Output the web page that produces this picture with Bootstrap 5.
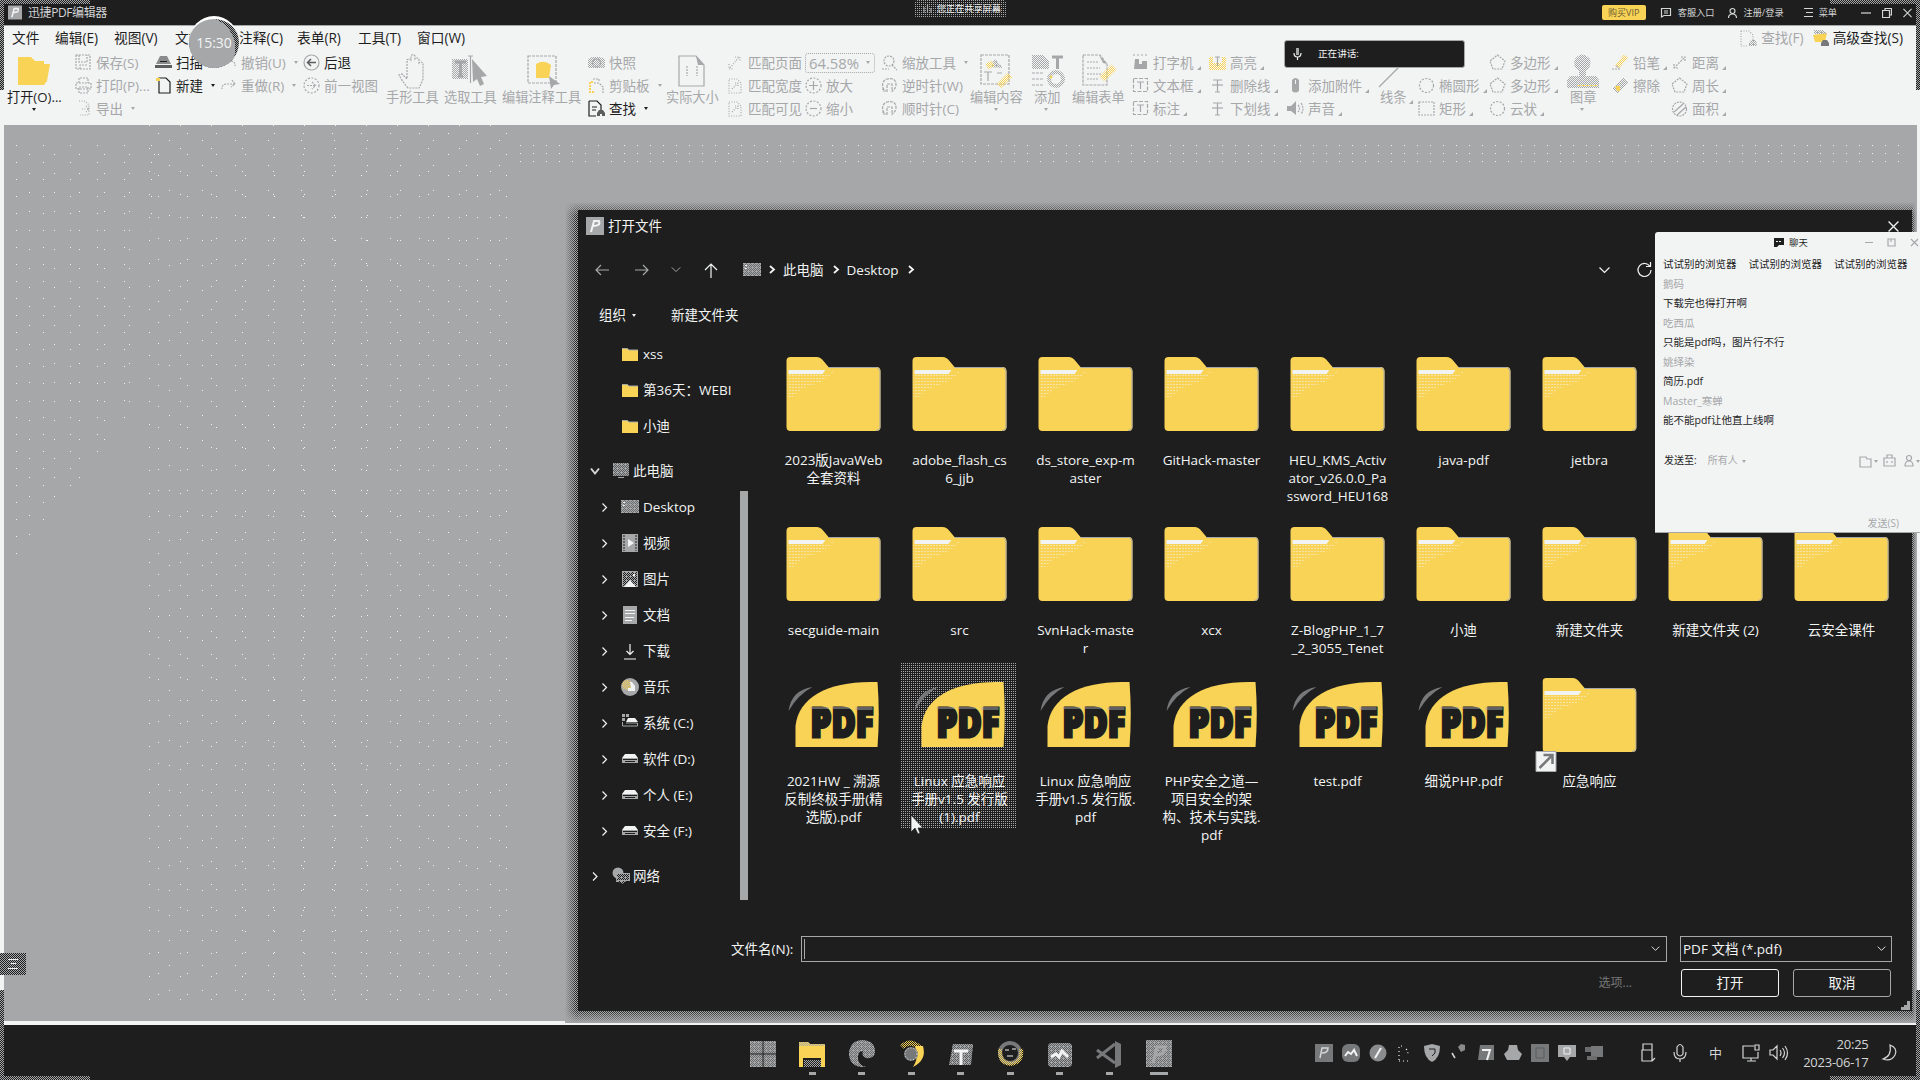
<!DOCTYPE html>
<html lang="zh-CN">
<head>
<meta charset="utf-8">
<title>迅捷PDF编辑器</title>
<link href="https://cdn.jsdelivr.net/npm/bootstrap@5.3.0/dist/css/bootstrap.min.css" rel="stylesheet">
<style>
:root{--ink:#1e1e1e;--mid:#a6a7a9;--paper:#f2f4f4;--sun:#f9d356;
--mesh:conic-gradient(#1e1e1e 25%,#a6a7a9 0 50%,#1e1e1e 0 75%,#a6a7a9 0);
--dots:conic-gradient(from 0deg at 1px 1px,transparent 75%,#a6a7a9 0);
--lightdots:conic-gradient(from 0deg at 1px 1px,transparent 75%,#f2f4f4 0)}
body{width:1920px;height:1080px;overflow:hidden;background:var(--ink);color:var(--paper);font:13.5px/18px "Open Sans","Noto Sans CJK SC",sans-serif}
svg{display:block;flex:none;overflow:visible}
.ln{fill:none;stroke:currentColor;stroke-width:1.2}
.nw{white-space:nowrap}
.app-title{height:26px;border-bottom:1px solid var(--mid);font-size:12px;padding-left:8px;color:#d4d5d6}
.app-title .tools{font-size:9.2px}
.vip{width:44px;height:15px;background:var(--sun);color:#6b5d33;border-radius:2px;font-size:9px;line-height:15px;margin-right:1px}
.app-menu{height:25px;background:var(--paper);color:var(--ink);font-size:13.7px;padding:0 17px 1px 12px}
.menu-grid{display:grid;grid-template-columns:43px 59px 61px 64px 58px 61px 59px 60px}
.ribbon{height:74px;background:var(--paper);color:var(--mid);font-size:13.5px;display:grid;padding-left:7px;
grid-template-columns:68px 80px 65px 83px 83px 58px 58px 86px 78px 61px 78px 76px 89px 62px 40px 60px 77px 78px 93px 38px 71px 77px 46px 59px 60px}
.ribbon>div{min-width:0}
.cmd{height:23px;display:flex;align-items:center;gap:4px;white-space:nowrap}
.cmd svg{width:17px;height:17px}
.big{display:flex;flex-direction:column;align-items:flex-start;white-space:nowrap;font-size:13.2px}
.big svg{height:37px;width:36px}
.more::after{content:"";display:inline-block;border:2px solid transparent;border-right-color:currentColor;border-bottom-color:currentColor;margin-left:3px;vertical-align:-2px}
.on{color:var(--ink)}
.caret{width:0;height:0;border:2.5px solid transparent;border-top:3px solid currentColor;border-bottom:0;display:inline-block;margin-left:4px}
.zoombox{width:70px;height:20px;border:1px dotted var(--mid);border-radius:3px;padding:0 4px 0 3px;font-size:14.8px}
.canvas{background:var(--mid);border-left:4px solid var(--paper);border-right:3px solid var(--paper);border-bottom:4px solid var(--paper)}
.grain{width:370px;height:880px;margin-left:145px;background:var(--lightdots) 0 0/31px 23px,var(--lightdots) 9px 8px/29px 21px,var(--lightdots) 20px 15px/33px 25px}
.grain2{width:140px;height:420px;background:var(--lightdots) 0 0/27px 17px,var(--lightdots) 13px 9px/25px 19px;margin-left:12px;position:absolute;top:145px;clip-path:polygon(0 0,100% 0,90% 60%,0 100%)}
.grain3{position:absolute;left:520px;top:145px;width:1380px;height:24px;background:var(--lightdots) 0 0/13px 8px}
.taskbar{height:55px;background:var(--ink)}
.float-share{position:absolute;left:915px;top:0;width:91px;height:18px;background:var(--dots) 0 0/2px 2px;border-radius:3px;font-size:9.2px}
.clock-disc{position:absolute;left:189px;top:16px;width:50px;height:52px;border-radius:50%;background:radial-gradient(circle at 30% 60%,var(--mid) 68%,transparent 69%),var(--mesh) 0 0/2px 2px;border-top:3px solid #fff;font-size:14px;line-height:48px}
.speaking{position:absolute;left:1284px;top:40px;width:181px;height:28px;background:var(--ink);border:1px solid var(--mid);border-radius:3px;font-size:9.6px;padding-left:8px;gap:16px}
.edge{position:absolute;background:var(--mesh) 0 0/2px 2px}
.halo{position:absolute;left:565px;top:202px;width:1351px;height:821px;background:linear-gradient(90deg,var(--mid),transparent 12px 1347px,var(--mid)),linear-gradient(var(--mid),transparent 14px 808px,var(--mid)),var(--mesh) 0 0/2px 2px}
.dlg{position:absolute;left:578px;top:210px;width:1334px;height:801px;background:var(--ink)}
.dlg-head{height:32px;padding:0 13px 0 8px}
.dlg-nav{height:55px;padding:0 260px 0 17px}
.dlg-tools{height:35px;padding-left:21px;gap:35px}
.dlg-tools .caret{margin-left:6px}
.dlg-body{height:568px}
.side{width:156px;overflow:hidden;padding-top:4px}
.tree{height:36px;display:flex;align-items:center;white-space:nowrap;padding-left:23px}
.tree .chev{width:7px;height:9px;margin-right:13px}
.tree .pic{width:18px;height:18px;margin-right:4px}
.tree.deep0{padding-left:43px}
.tree.root{padding-left:12px;margin-top:9px}
.tree.root .chev{width:10px;margin-right:12px}
.tree.root .pic{margin-right:3px}
.bar-track{width:15px;padding:159px 0 0 6px}
.bar-thumb{width:8px;height:409px;background:var(--mid)}
.files{display:grid;grid-template-columns:repeat(9,126px);grid-template-rows:170px 151px 200px;margin-left:21px;padding-top:10px}
.tile{width:116px;margin:0 5px;padding:15px 0 0 1px;text-align:center;white-space:nowrap;align-self:start}
.tile>svg{margin:0 auto 20px 10px;width:95px;height:74px}
.tile.hot{background:var(--dots) 0 0/2px 2px;height:165px}
.foot-row{height:25px;padding:0 20px 0 153px}
.fname{width:866px;height:26px;border:1px solid var(--mid);margin-left:6px;padding:0 6px 0 2px}
.ftype{width:212px;height:26px;border:1px solid var(--mid);margin-left:13px;padding:0 5px 0 2px}
.text-caret{width:1px;height:20px;background:var(--mid)}
.dbtn{width:98px;height:28px;border:1px solid var(--mid);border-radius:3px;color:var(--paper);background:none;padding:0;font-size:13.5px;line-height:25px}
.dbtn.main{border-color:var(--paper)}
.chat{position:absolute;left:1655px;top:232px;width:265px;height:301px;background:var(--paper);color:var(--ink);border-radius:3px 0 0 0;border-bottom:1px solid var(--mid);font-size:10.5px;line-height:19.5px;overflow:hidden}
.chat-head{height:23px;padding:0 2px 2px 119px;font-size:9.4px;line-height:20px}
.chat-log{height:196px;padding-left:8px}
.who,.faint{color:var(--mid)}
.pinned{gap:12px}
.chat-send{padding:0 0 0 9px;height:20px;font-size:10px}
.starts{display:grid;grid-template-columns:repeat(9,49.5px);padding-left:738px}
.starts>div{display:flex;flex-direction:column;align-items:center}
.starts svg{width:28px;height:28px;margin-top:15px}
.starts i{width:7px;height:3px;background:var(--mid);margin-top:4px}
.starts .cur i{width:18px}
.tray{margin-left:127px;display:grid;grid-template-columns:repeat(11,27px)}
.tray svg,.sys svg{width:18px;height:18px;margin:auto}
.sys{margin-left:25px;color:#d4d5d6;display:grid;grid-template-columns:30px 34px 38px 33px 23px 78px 42px;align-items:center;font-size:13px}
</style>
<script src="https://cdn.jsdelivr.net/npm/bootstrap@5.3.0/dist/js/bootstrap.bundle.min.js"></script>
</head>
<body class="d-flex flex-column position-relative">
<svg width="0" height="0" class="position-absolute">
<defs>
<pattern id="pm" width="2" height="2" patternUnits="userSpaceOnUse"><path fill="#a6a7a9" d="M0 0h1v1H0zM1 1h1v1H1z"/></pattern>
<pattern id="pw" width="3" height="3" patternUnits="userSpaceOnUse"><path fill="#f2f4f4" d="M0 0h1v1H0z"/></pattern>
<pattern id="pp" width="4" height="4" patternUnits="userSpaceOnUse"><path fill="#a6a7a9" d="M0 0h1v1H0zM2 0h1v1H2zM1 1h1v1H1zM3 1h1v1H3zM0 2h2v1H0zM2 2h1v1H2zM1 3h1v1H1zM3 3h1v1H3z"/></pattern>
<pattern id="py" width="2" height="2" patternUnits="userSpaceOnUse"><path fill="#f9d356" d="M0 0h1v1H0zM1 1h1v1H1z"/></pattern>
<symbol id="folder" viewBox="0 0 94 74"><path fill="#f9d356" d="M0 4q0-4 4-4h26q4 0 7 4l5 6h48q4 0 4 4v56q0 4-4 4H4q-4 0-4-4z"/><path fill="none" stroke="#a6a7a9" d="M42 10.500h48q3.500 0 3.500 4v56q0 3-4 3"/><path fill="#f2f4f4" d="M2 13h37l-3 4H2z"/><path fill="url(#pw)" d="M1 17h40l10-4-16 12-20 7L4 42H1z"/></symbol>
<symbol id="pdf" viewBox="0 0 94 74"><path fill="#f9d356" d="M9 69V48C12 20 40 4 84 4h7q2.500 32 0 65z"/><path fill="#77787a" d="M2 33Q5 12 26 9 12 16 2 33z"/><text x="24" y="58.500" font-family="Open Sans" font-weight="800" font-size="40.500" textLength="63" lengthAdjust="spacingAndGlyphs" fill="#1e1e1e" stroke="#1e1e1e" stroke-width="3">PDF</text><path fill="url(#pm)" d="M24 29h18v2H24zM46 29h17v2H46zM69 29h17v3H69z"/></symbol>
<symbol id="fsm" viewBox="0 0 18 18"><path fill="#f9d356" d="M1 3h5l2 2h9v11H1z"/><path stroke="#a6a7a9" fill="none" d="M1 3.500h5l2 1.500h9"/></symbol>
<symbol id="pc" viewBox="0 0 18 18"><path fill="#5c5d5e" d="M1 1h16v13H1z"/><path fill="url(#pp)" d="M1 1h16v13H1z"/><path fill="#a6a7a9" d="M6 15h6v1H6z"/></symbol>
<symbol id="desk" viewBox="0 0 18 18"><path fill="#6b6c6d" d="M0 2h18v13H0z"/><path fill="url(#pp)" d="M0 2h18v13H0z"/><path fill="#f2f4f4" d="M2 4h2v1H2zM2 7h2v1H2z"/></symbol>
<symbol id="vid" viewBox="0 0 18 18"><path fill="#a6a7a9" d="M1 0h16v18H1z"/><path fill="none" stroke="#1e1e1e" stroke-dasharray="2 1" d="M3 1v16M15 1v16"/><path fill="#f2f4f4" d="M7 5l6 4-6 4z"/></symbol>
<symbol id="img" viewBox="0 0 18 18"><path fill="url(#pp)" d="M1 1h16v16H1z"/><path fill="none" stroke="#a6a7a9" d="M1.500 1.500h15v15h-15z"/><path fill="#f2f4f4" d="M3 17l6-7 6 7zM12 4h2v2h-2z"/></symbol>
<symbol id="doc" viewBox="0 0 18 18"><path fill="#a6a7a9" d="M2 0h14v18H2z"/><path stroke="#f2f4f4" d="M4 4.500h10M4 7.500h10M4 11.500h9M4 14.500h7"/></symbol>
<symbol id="down" viewBox="0 0 18 18"><path class="ln" stroke="#a6a7a9" d="M9 2v10M5.500 9L9 12.500 12.500 9M3 17h12"/></symbol>
<symbol id="music" viewBox="0 0 18 18"><circle cx="9" cy="9" r="9" fill="#a6a7a9"/><circle cx="6" cy="7" r="5" fill="url(#py)"/><path fill="#f2f4f4" d="M9 4h2l3 4v5H7v-3h3z"/></symbol>
<symbol id="disk" viewBox="0 0 18 18"><path fill="#f2f4f4" d="M4 4h10l3 4H1z"/><path fill="#a6a7a9" d="M1 8h16v5H1z"/><path stroke="#1e1e1e" d="M2 9.500h14M4 11.500h10"/></symbol>
<symbol id="diskc" viewBox="0 0 18 18"><path fill="#a6a7a9" d="M1 0h3v3H1zM5 0h3v3H5zM1 4h3v3H1z"/><path fill="#f2f4f4" d="M7 4h7l3 4H5z"/><path fill="none" stroke="#a6a7a9" d="M1.500 8v4h15V9H5"/></symbol>
<symbol id="net" viewBox="0 0 18 18"><circle cx="6" cy="6" r="5.500" fill="#a6a7a9"/><path fill="#1e1e1e" d="M4 6h14v8H4z"/><path fill="url(#pp)" d="M4 6h14v8h-4l-3 3-4-2H4z"/><path fill="none" stroke="#a6a7a9" d="M4.500 6.500h13v7h-13z"/></symbol>
<symbol id="cr" viewBox="0 0 7 9"><path class="ln" stroke="#a6a7a9" d="M1.500.500l4 4-4 4"/></symbol>
<symbol id="cd" viewBox="0 0 12 8"><path class="ln" stroke="#d4d5d6" d="M1 1.500l5 5 5-5"/></symbol>
<symbol id="cdb" viewBox="0 0 10 8"><path fill="none" stroke="#d4d5d6" stroke-width="2" d="M1 1l4 5 4-5"/></symbol>
<symbol id="logo" viewBox="0 0 18 18"><path fill="#a6a7a9" d="M0 0h18v18H0z"/><path fill="none" stroke="#f2f4f4" stroke-width="2" d="M5 15L8 4h5q2 5-6 5"/></symbol>
<symbol id="i-save" viewBox="0 0 17 17"><path class="ln" stroke-dasharray="2 1" d="M1 1h14v14H1zM4 1v7h8V1M5 15v-4h7"/></symbol>
<symbol id="i-print" viewBox="0 0 17 17"><path class="ln" stroke-dasharray="2 1" d="M4 6V1h9v5M1 6h15v6H1zM4 10h9v6H4z"/></symbol>
<symbol id="i-exp" viewBox="0 0 17 17"><path class="ln" stroke-dasharray="1 1.500" d="M4 1h6l4 4v10H5M7 9h7M11 6l3 3-3 3"/></symbol>
<symbol id="i-scan" viewBox="0 0 17 17"><path fill="#8a8b8d" d="M5 2h7l4 8H1z"/><path fill="#5c5d5e" d="M0 11h17v3H0z"/><path stroke="#1e1e1e" d="M5 7.500h7"/></symbol>
<symbol id="i-new" viewBox="0 0 17 17"><path class="ln" stroke="#77787a" d="M4 1h7l4 4v11H4z"/><path fill="#f9d356" d="M1 1h4v3H1z"/></symbol>
<symbol id="i-undo" viewBox="0 0 17 17"><path class="ln" stroke-dasharray="2 1" d="M5 3L2 7l4 3M2 7h9q4 0 4 5"/></symbol>
<symbol id="i-redo" viewBox="0 0 17 17"><path class="ln" stroke-dasharray="2 1" d="M12 3l3 4-4 3M15 7H6q-4 0-4 5"/></symbol>
<symbol id="i-back" viewBox="0 0 17 17"><circle class="ln" cx="8.500" cy="8.500" r="7.500"/><path stroke="#5c5d5e" fill="none" stroke-width="1.500" d="M13 8.500H5M8 5L4.500 8.500 8 12"/></symbol>
<symbol id="i-fwd" viewBox="0 0 17 17"><circle class="ln" stroke-dasharray="2 1.500" cx="8.500" cy="8.500" r="7.500"/><path class="ln" stroke-dasharray="2 1" d="M4 8.500h8M9 5l3.500 3.500L9 12"/></symbol>
<symbol id="i-circ" viewBox="0 0 17 17"><circle class="ln" stroke-dasharray="2 1.500" cx="8.500" cy="8.500" r="7"/></symbol>
<symbol id="i-plus" viewBox="0 0 17 17"><circle class="ln" stroke-dasharray="2 1.500" cx="8.500" cy="8.500" r="7.500"/><path class="ln" d="M4 8.500h9M8.500 4v9"/></symbol>
<symbol id="i-minus" viewBox="0 0 17 17"><circle class="ln" stroke-dasharray="2 1.500" cx="8.500" cy="8.500" r="7.500"/><path class="ln" d="M5 8.500h7"/></symbol>
<symbol id="i-cam" viewBox="0 0 17 17"><path fill="url(#pm)" d="M0 5l4-2h8l5 2v9H0z"/><circle class="ln" cx="8.500" cy="9" r="4"/></symbol>
<symbol id="i-clip" viewBox="0 0 17 17"><path class="ln" stroke-dasharray="2 1" d="M5 2h6v3M6 6h5l4 4v6"/><path fill="none" stroke="#f9d356" stroke-width="2" stroke-dasharray="2 1" d="M5 5H2v10h4"/></symbol>
<symbol id="i-find" viewBox="0 0 17 17"><path class="ln" stroke="#77787a" d="M1 1h8l4 4v5M1 1v15h7M4 7h5M4 10h4"/><path fill="#5c5d5e" d="M9 16v-3l2-3h4l2 3v3h-3v-2h-2v2z"/></symbol>
<symbol id="i-findg" viewBox="0 0 17 17"><path class="ln" stroke-dasharray="1 1.500" d="M1 1h8l4 4v5M1 1v15h7"/><path fill="url(#pp)" d="M9 16v-3l2-3h4l2 3v3z"/></symbol>
<symbol id="i-findy" viewBox="0 0 17 17"><path fill="#f9d356" d="M1 5l14-2-2 9H3z"/><path fill="url(#pp)" d="M2 0h9l4 4H2z"/><path fill="#77787a" d="M9 16v-3l2-3h4l2 3v3z"/></symbol>
<symbol id="i-fit" viewBox="0 0 17 17"><path class="ln" stroke-dasharray="1 1.500" d="M3 14L12 3M8 3h5v5M2 10v5h5"/></symbol>
<symbol id="i-page" viewBox="0 0 17 17"><path class="ln" stroke-dasharray="1 1.500" d="M2 2h8l4 4v10H2zM5 12l6-6M8 6h3v3"/></symbol>
<symbol id="i-zoom" viewBox="0 0 17 17"><circle class="ln" stroke-dasharray="2 1" cx="8" cy="7" r="5"/><path class="ln" stroke-dasharray="2 1" d="M11 11l5 5M1 15h7"/></symbol>
<symbol id="i-rot" viewBox="0 0 17 17"><path class="ln" stroke-dasharray="3 1" d="M5 14H2v-3M3 13Q-1 5 6 2q9-2 9 6-1 5-4 6M6 15V7h5v8"/></symbol>
<symbol id="i-box" viewBox="0 0 17 17"><path class="ln" stroke-dasharray="4 1.500" d="M1.500 1.500h14v13h-14z"/><path class="ln" d="M5 5h7M8.500 5v7"/></symbol>
<symbol id="i-type" viewBox="0 0 17 17"><path class="ln" stroke-dasharray="2 2" d="M1 1h15"/><path fill="currentColor" d="M3 5h4v5h3V7h5v8H2z"/></symbol>
<symbol id="i-hi" viewBox="0 0 17 17"><path fill="url(#py)" d="M0 3h4v6h9V3h4v13H0z"/><path class="ln" stroke-width="2" d="M6 3h5M8.500 3v9"/></symbol>
<symbol id="i-t" viewBox="0 0 17 17"><path class="ln" d="M4 3h9M8.500 3v12M6 15h5" stroke-width="1.600"/><path class="ln" d="M3 8h11"/></symbol>
<symbol id="i-att" viewBox="0 0 17 17"><path fill="currentColor" d="M5 3q3.500-4 7 0v11q-3.500 3-7 0z"/><path stroke="#f2f4f4" d="M8.500 3v4"/></symbol>
<symbol id="i-snd" viewBox="0 0 17 17"><path fill="currentColor" d="M0 6h4l5-5v14l-5-4H0z"/><path class="ln" stroke-dasharray="2 1" d="M11 5q3 3 0 7M14 3q4 6 0 11"/></symbol>
<symbol id="i-rect" viewBox="0 0 17 17"><path class="ln" stroke-dasharray="2 1" d="M1 2h15v13H1z"/></symbol>
<symbol id="i-poly" viewBox="0 0 17 17"><path class="ln" stroke-dasharray="2 1" d="M8.500 1L16 7l-3 8H4L1 7z"/></symbol>
<symbol id="i-pen" viewBox="0 0 17 17"><path stroke="url(#py)" stroke-width="5" d="M5 13L14 2"/><path class="ln" stroke-dasharray="2 1" d="M0 15h9M4 12l3 2"/></symbol>
<symbol id="i-erase" viewBox="0 0 17 17"><path stroke="url(#pm)" stroke-width="7" d="M3 14L14 3"/><path fill="#f9d356" d="M3 9h5v5H5z"/></symbol>
<symbol id="i-dist" viewBox="0 0 17 17"><path class="ln" stroke-dasharray="2 1" d="M3 14L14 3M10 3h4v4M3 10v4h4"/></symbol>
<symbol id="i-area" viewBox="0 0 17 17"><circle class="ln" cx="8.500" cy="9" r="7" stroke-dasharray="2 1"/><path class="ln" d="M3 12l9-8M6 15l9-8"/></symbol>
<symbol id="c-x" viewBox="0 0 10 10"><path class="ln" d="M.500.500l9 9M9.500.500l-9 9"/></symbol>
<symbol id="c-r" viewBox="0 0 10 10"><path class="ln" d="M.500 2.500h7v7h-7zM3 2.500v-2h6.500V7H8"/></symbol>
<symbol id="c-m" viewBox="0 0 10 10"><path class="ln" d="M0 5h10"/></symbol>
</defs></svg>

<header class="app-title d-flex align-items-center flex-shrink-0">
  <svg width="14" height="17"><use href="#logo"/></svg><span class="nw" style="letter-spacing:-.4px;margin-left:6px">迅捷PDF编辑器</span>
  <div class="tools d-flex align-items-center ms-auto nw">
    <span class="vip text-center">购买VIP</span>
    <svg style="margin-left:14px" width="10" height="9"><path class="ln" d="M.500.500h9v7H3L.500 9zM3 3h4M3 5h4"/></svg><span style="margin-left:7px">客服入口</span>
    <svg style="margin-left:13px" width="9" height="10"><circle class="ln" cx="4.500" cy="3" r="2.500"/><path class="ln" d="M.500 10q0-4 4-4t4 4"/></svg><span style="margin-left:7px">注册/登录</span>
    <svg style="margin-left:20px" width="9" height="9"><path class="ln" d="M0 .500h9M2 4.500h7M0 8.500h9"/></svg><span style="margin-left:6px">菜单</span>
    <svg style="margin-left:24px" width="10" height="10"><use href="#c-m"/></svg>
    <svg style="margin-left:11px" width="10" height="10"><use href="#c-r"/></svg>
    <svg style="margin:0 8px 0 11px" width="9" height="10"><use href="#c-x"/></svg>
  </div>
</header>

<nav class="app-menu d-flex align-items-center justify-content-between flex-shrink-0 nw">
  <div class="menu-grid"><span>文件</span><span>编辑(E)</span><span>视图(V)</span><span>文档(D)</span><span>注释(C)</span><span>表单(R)</span><span>工具(T)</span><span>窗口(W)</span></div>
  <div class="d-flex align-items-center gap-1"><svg width="17" height="17" class="faint"><use href="#i-findg"/></svg><span class="faint me-1">查找(F)</span><svg width="17" height="17"><use href="#i-findy"/></svg><span>高级查找(S)</span></div>
</nav>

<section class="ribbon flex-shrink-0">
  <div class="big on"><svg viewBox="0 0 36 37" style="margin-left:9px"><path fill="#f9d356" d="M2 6h13l4 4h9v3h6l-3 17-3 4H2z"/></svg>打开(O)...<i class="caret" style="margin:2px 0 0 25px"></i></div>
  <div><div class="cmd"><svg><use href="#i-save"/></svg>保存(S)</div><div class="cmd"><svg><use href="#i-print"/></svg>打印(P)...</div><div class="cmd"><svg><use href="#i-exp"/></svg>导出<i class="caret"></i></div></div>
  <div><div class="cmd on"><svg><use href="#i-scan"/></svg>扫描</div><div class="cmd on"><svg><use href="#i-new"/></svg>新建<i class="caret"></i></div></div>
  <div><div class="cmd"><svg><use href="#i-undo"/></svg>撤销(U)<i class="caret"></i></div><div class="cmd"><svg><use href="#i-redo"/></svg>重做(R)<i class="caret"></i></div></div>
  <div><div class="cmd"><svg><use href="#i-back"/></svg><span class="on">后退</span></div><div class="cmd"><svg><use href="#i-fwd"/></svg>前一视图</div></div>
  <div class="big"><svg viewBox="0 0 36 37" style="margin-left:8px"><path class="ln" stroke-dasharray="2 1" d="M14 37Q8 30 5 24l3-1 5 5V9q2-2 4 0V5q2-3 4 0v3q2-2 4 0v4q2-2 4 0v16q-2 5-4 9z"/></svg>手形工具</div>
  <div class="big"><svg viewBox="0 0 36 37" style="margin-left:8px"><path fill="url(#pm)" d="M0 8h16v20H0z"/><path stroke="#a6a7a9" stroke-width="3" fill="none" d="M3 11h11M8.500 11v14M6 25h5"/><path class="ln" d="M16 5h5M18.500 5v27"/><path fill="#a6a7a9" d="M20 8l15 17-6 1 3 7-4 2-3-7-4 3z"/></svg>选取工具</div>
  <div class="big"><svg viewBox="0 0 36 37" style="margin-left:23px"><path class="ln" stroke-dasharray="3 1" d="M3 5h28v27H3z"/><path fill="#f9d356" d="M11 13q8-5 15 1l-2 13H11z"/><path fill="#a6a7a9" d="M24 25l11 8-6 1-3 4z"/></svg>编辑注释工具</div>
  <div><div class="cmd"><svg><use href="#i-cam"/></svg>快照</div><div class="cmd"><svg><use href="#i-clip"/></svg>剪贴板<i class="caret"></i></div><div class="cmd on"><svg><use href="#i-find"/></svg>查找<i class="caret"></i></div></div>
  <div class="big"><svg viewBox="0 0 36 37" style="margin-left:12px"><path class="ln" d="M1 5h17l8 9v21H1z"/><path fill="#a6a7a9" d="M18 5l8 9h-6z"/><path class="ln" stroke-dasharray="2 1" d="M9 15v10M19 15v10"/></svg>实际大小</div>
  <div><div class="cmd"><svg><use href="#i-fit"/></svg>匹配页面</div><div class="cmd"><svg><use href="#i-page"/></svg>匹配宽度</div><div class="cmd"><svg><use href="#i-page"/></svg>匹配可见</div></div>
  <div><div class="cmd"><div class="zoombox d-flex align-items-center justify-content-between">64.58%<i class="caret"></i></div></div><div class="cmd"><svg><use href="#i-plus"/></svg>放大</div><div class="cmd"><svg><use href="#i-minus"/></svg>缩小</div></div>
  <div><div class="cmd"><svg><use href="#i-zoom"/></svg>缩放工具<i class="caret"></i></div><div class="cmd"><svg><use href="#i-rot"/></svg>逆时针(W)</div><div class="cmd"><svg><use href="#i-rot"/></svg>顺时针(C)</div></div>
  <div class="big"><svg viewBox="0 0 36 37" style="margin-left:9px"><path class="ln" stroke-dasharray="3 1" d="M2 4h28v29H2z"/><path fill="url(#pp)" d="M10 16l6-8 8 9z"/><path class="ln" d="M5 21h8M9 21v9M18 22h5"/><path stroke="url(#py)" stroke-width="6" d="M20 35L31 24M8 16l6-4"/></svg>编辑内容<i class="caret" style="margin:2px 0 0 24px"></i></div>
  <div class="big"><svg viewBox="0 0 36 37"><path fill="url(#pm)" d="M0 4h11l6 6v8H0z"/><path stroke="#a6a7a9" stroke-width="3" fill="none" d="M20 6h11M25.500 6v12"/><path class="ln" stroke-dasharray="3 1" d="M0 22h11M0 28h11M0 34h11"/><circle cx="24" cy="28" r="7" fill="none" stroke="url(#pm)" stroke-width="4"/><circle cx="19" cy="26" r="1.500" fill="#f9d356"/></svg><span style="margin-left:2px">添加</span><i class="caret" style="margin:2px 0 0 12px"></i></div>
  <div class="big"><svg viewBox="0 0 36 37" style="margin-left:10px"><path class="ln" stroke-dasharray="3 1" d="M1 4h17l7 9v21H1z"/><path fill="#a6a7a9" d="M17 4l8 9-4-1z"/><path class="ln" stroke-dasharray="2 1" d="M5 11h12M5 17h13M5 23h14M5 28h12"/><path stroke="url(#py)" stroke-width="7" d="M20 28L32 16"/></svg>编辑表单</div>
  <div><div class="cmd"><svg><use href="#i-type"/></svg><span class="more">打字机</span></div><div class="cmd"><svg><use href="#i-box"/></svg><span class="more">文本框</span></div><div class="cmd"><svg><use href="#i-box"/></svg><span class="more">标注</span></div></div>
  <div><div class="cmd"><svg><use href="#i-hi"/></svg><span class="more">高亮</span></div><div class="cmd"><svg><use href="#i-t"/></svg><span class="more">删除线</span></div><div class="cmd"><svg><use href="#i-t"/></svg><span class="more">下划线</span></div></div>
  <div><div class="cmd"></div><div class="cmd"><svg><use href="#i-att"/></svg><span class="more">添加附件</span></div><div class="cmd"><svg><use href="#i-snd"/></svg><span class="more">声音</span></div></div>
  <div class="big"><svg viewBox="0 0 36 37"><path class="ln" d="M-1 36L29 6"/></svg><span class="more">线条</span></div>
  <div><div class="cmd"></div><div class="cmd"><svg><use href="#i-circ"/></svg><span class="more">椭圆形</span></div><div class="cmd"><svg><use href="#i-rect"/></svg><span class="more">矩形</span></div></div>
  <div><div class="cmd"><svg><use href="#i-poly"/></svg><span class="more">多边形</span></div><div class="cmd"><svg><use href="#i-poly"/></svg><span class="more">多边形</span></div><div class="cmd"><svg><use href="#i-circ"/></svg><span class="more">云状</span></div></div>
  <div class="big"><svg viewBox="0 0 36 37"><path fill="url(#pm)" d="M9 8q7-9 15 0 2 8-4 12v5h10l3 4v8H1v-8l3-4h9v-5Q6 15 9 8z"/><path stroke="#f9d356" stroke-dasharray="3 1" d="M12 34.500h19"/></svg><span style="margin-left:4px">图章</span><i class="caret" style="margin:2px 0 0 14px"></i></div>
  <div><div class="cmd"><svg><use href="#i-pen"/></svg><span class="more">铅笔</span></div><div class="cmd"><svg><use href="#i-erase"/></svg>擦除</div></div>
  <div><div class="cmd"><svg><use href="#i-dist"/></svg><span class="more">距离</span></div><div class="cmd"><svg><use href="#i-poly"/></svg><span class="more">周长</span></div><div class="cmd"><svg><use href="#i-area"/></svg><span class="more">面积</span></div></div>
</section>

<main class="canvas flex-fill"><div class="grain"></div><div class="grain2"></div><div class="grain3"></div></main>

<footer class="taskbar d-flex flex-shrink-0">
  <div class="starts">
    <div><svg viewBox="0 0 28 28"><path fill="#6b6c6d" d="M1 1h26v26H1z"/><path fill="url(#pp)" d="M1 1h26v26H1z"/><path stroke="#1e1e1e" d="M14 1v26M1 14h26"/></svg></div>
    <div><svg viewBox="0 0 28 28"><path fill="#f9d356" d="M1 2h9l2 2h15v23h-4v-9H5v9H1z"/><path fill="url(#pm)" d="M1 2h9l2 2h15v2H1zM6 20h17v7H6z"/></svg><i></i></div>
    <div><svg viewBox="0 0 28 28"><path fill="#6b6c6d" d="M1 14Q2 0 15 0q12 1 12 12-1 7-9 6-5-2-3-7-6 0-5 9 2 6 8 7-16 1-17-13z"/><path fill="url(#pp)" d="M1 14Q2 0 15 0q12 1 12 12-1 7-9 6-5-2-3-7-6 0-5 9 2 6 8 7-16 1-17-13z"/></svg><i></i></div>
    <div><svg viewBox="0 0 28 28"><path fill="none" stroke="url(#py)" stroke-width="5" d="M5 7q8-8 18 1"/><path fill="#f9d356" d="M18 6h8q4 14-10 21 5-8 3-14z"/><circle cx="14" cy="14" r="7" fill="#77787a"/><circle cx="14" cy="14" r="6" fill="none" stroke="#f2f4f4" stroke-dasharray="1 2"/></svg><i></i></div>
    <div><svg viewBox="0 0 28 28"><path fill="#5c5d5e" d="M6 4h20l-2 21H2z"/><path fill="url(#pp)" d="M6 4h20l-2 21H2z"/><path stroke="#f2f4f4" stroke-width="3" fill="none" d="M7 11h14M14 10v15"/></svg><i></i></div>
    <div><svg viewBox="0 0 28 28"><circle cx="14" cy="13" r="10" fill="none" stroke="#77787a" stroke-width="4"/><path fill="none" stroke="url(#py)" stroke-width="4" d="M4 9q-1 14 11 15 12-2 10-15"/><path class="ln" stroke="#a6a7a9" d="M9 10h4M16 9h4M11 16h6"/></svg><i></i></div>
    <div><svg viewBox="0 0 28 28"><rect x="2" y="3" width="24" height="24" rx="4" fill="#5c5d5e"/><rect x="2" y="3" width="24" height="24" rx="4" fill="url(#pp)"/><path stroke="#f2f4f4" stroke-width="3" fill="none" d="M5 17l5-3 3 3 3-6 6 6"/></svg><i></i></div>
    <div><svg viewBox="0 0 28 28"><path fill="#77787a" d="M20 1l6 3v21l-6 3z"/><path fill="none" stroke="#77787a" stroke-width="3" d="M20 4L2 18M20 23L2 10"/></svg><i></i></div>
    <div class="cur"><svg viewBox="0 0 28 28"><path fill="#6b6c6d" d="M1 0h26v27H1z"/><path fill="url(#pp)" d="M1 0h26v27H1z"/><path stroke="#a6a7a9" stroke-width="3" fill="none" d="M8 23l4-16h8q0 8-9 8"/></svg><i></i></div>
  </div>
  <div class="tray">
    <svg viewBox="0 0 18 18"><path fill="#77787a" d="M0 0h18v18H0z"/><path stroke="#d4d5d6" fill="none" stroke-width="1.500" d="M5 14L7 4h6q0 5-6 5"/></svg>
    <svg viewBox="0 0 18 18"><rect width="18" height="18" rx="6" fill="#77787a"/><path stroke="#f2f4f4" stroke-width="2" fill="none" d="M3 12l3-4 3 2 3-4 3 6"/></svg>
    <svg viewBox="0 0 18 18"><circle cx="9" cy="9" r="8.500" fill="#8a8b8d"/><path stroke="#f2f4f4" stroke-width="2" d="M6 14l6-10"/></svg>
    <svg viewBox="0 0 18 18"><path class="ln" stroke="#77787a" stroke-dasharray="1 3" d="M3 16V2h4M10 5q4 3 0 6M3 17h12"/></svg>
    <svg viewBox="0 0 18 18"><path fill="#a6a7a9" d="M1 2l8-2 8 2q0 12-8 16-8-4-8-16z"/><path stroke="#1e1e1e" fill="none" d="M6 5h6v4l-3 3"/></svg>
    <svg viewBox="0 0 18 18"><path fill="#8a8b8d" d="M8 3l3-3 4 1v5l-4 2z"/><path stroke="#d4d5d6" stroke-width="1.500" d="M2 9l3 5"/></svg>
    <svg viewBox="0 0 18 18"><path fill="#77787a" d="M3 1h14v15H1z"/><path stroke="#f2f4f4" stroke-width="2" fill="none" d="M5 6h8l-3 10"/></svg>
    <svg viewBox="0 0 18 18"><path fill="#a6a7a9" d="M5 1h8l1 5 4 4-3 6H3l-3-6 4-4z"/></svg>
    <svg viewBox="0 0 18 18"><path fill="#77787a" d="M0 0h18v18H0z"/><path stroke="#5c5d5e" fill="none" d="M5 4h8v10H5z"/></svg>
    <svg viewBox="0 0 18 18"><path fill="#a6a7a9" d="M0 1h18v12h-6l-3 4-3-4H0z"/><path stroke="#f2f4f4" fill="none" d="M6 4h6v6H6z"/></svg>
    <svg viewBox="0 0 18 18"><path fill="#77787a" d="M6 2h12v11H6z"/><path fill="#6b6c6d" d="M0 3h6v5H0zM2 12h10v4H2z"/></svg>
  </div>
  <div class="sys">
    <svg viewBox="0 0 18 18"><path class="ln" stroke="#a6a7a9" d="M4 0h9v6H4zM3 6h10v11H3zM13 17l3-3"/></svg>
    <svg viewBox="0 0 18 18"><path class="ln" d="M6 3q3-5 6 0v7q-3 4-6 0zM3 8q0 7 6 7t6-7M9 15v3"/></svg>
    <span class="text-center">中</span>
    <svg viewBox="0 0 18 18"><path class="ln" stroke-width="1.600" d="M12 2H1v12h15V8M5 17h9M13 1h4v5h-4zM9 14v3"/></svg>
    <svg viewBox="0 0 18 18"><path class="ln" stroke-width="1.600" d="M0 6h3l4-4v13l-4-4H0zM10 6q2 3 0 6M12.500 4q4 5 0 10M15 2q5 7 0 14"/></svg>
    <div class="text-end nw" style="letter-spacing:-.25px"><div>20:25</div><div>2023-06-17</div></div>
    <svg viewBox="0 0 18 18"><path class="ln" stroke-width="1.600" d="M9 1q8 3 5 10-4 7-12 4 9-3 7-14z"/></svg>
  </div>
</footer>

<div class="halo"></div>
<section class="dlg d-flex flex-column">
  <div class="dlg-head d-flex align-items-center"><svg width="18" height="18" class="me-1"><use href="#logo"/></svg>打开文件<svg class="ms-auto" width="11" height="11"><use href="#c-x"/></svg></div>
  <div class="dlg-nav d-flex align-items-center">
    <svg width="14" height="12" class="faint"><path class="ln" stroke-width="1.500" d="M14 6H1M6 1L1 6l5 5"/></svg>
    <svg width="14" height="12" class="faint" style="margin-left:26px"><path class="ln" stroke-width="1.500" d="M0 6h13M8 1l5 5-5 5"/></svg>
    <svg width="10" height="7" class="faint" style="margin-left:22px"><use href="#cd"/></svg>
    <svg width="14" height="16" style="margin-left:23px"><path class="ln" stroke-width="1.600" d="M7 16V2M1 8l6-6 6 6"/></svg>
    <svg width="18" height="18" style="margin-left:25px"><use href="#desk"/></svg>
    <svg width="6" height="9" style="margin:0 8px 0 8px"><path fill="none" stroke="#f2f4f4" stroke-width="1.800" d="M1 1l4 3.500L1 8"/></svg>此电脑
    <svg width="6" height="9" style="margin:0 8px 0 9px"><path fill="none" stroke="#f2f4f4" stroke-width="1.800" d="M1 1l4 3.500L1 8"/></svg>Desktop
    <svg width="6" height="9" style="margin-left:9px"><path fill="none" stroke="#f2f4f4" stroke-width="1.800" d="M1 1l4 3.500L1 8"/></svg>
    <svg width="13" height="8" class="ms-auto"><use href="#cd"/></svg>
    <svg width="15" height="15" style="margin-left:26px"><path class="ln" stroke-width="1.500" d="M13 4.500A6.500 6.500 0 1 0 14 8M13.500 0v4.500H9"/></svg>
  </div>
  <div class="dlg-tools d-flex align-items-center"><span>组织<i class="caret align-middle"></i></span><span>新建文件夹</span></div>
  <div class="dlg-body d-flex">
    <div class="side flex-shrink-0">
      <div class="tree deep0"><svg class="pic"><use href="#fsm"/></svg>xss</div>
      <div class="tree deep0"><svg class="pic"><use href="#fsm"/></svg>第36天：WEBI</div>
      <div class="tree deep0"><svg class="pic"><use href="#fsm"/></svg>小迪</div>
      <div class="tree root"><svg class="chev"><use href="#cdb"/></svg><svg class="pic"><use href="#pc"/></svg>此电脑</div>
      <div class="tree"><svg class="chev"><use href="#cr"/></svg><svg class="pic"><use href="#desk"/></svg>Desktop</div>
      <div class="tree"><svg class="chev"><use href="#cr"/></svg><svg class="pic"><use href="#vid"/></svg>视频</div>
      <div class="tree"><svg class="chev"><use href="#cr"/></svg><svg class="pic"><use href="#img"/></svg>图片</div>
      <div class="tree"><svg class="chev"><use href="#cr"/></svg><svg class="pic"><use href="#doc"/></svg>文档</div>
      <div class="tree"><svg class="chev"><use href="#cr"/></svg><svg class="pic"><use href="#down"/></svg>下载</div>
      <div class="tree"><svg class="chev"><use href="#cr"/></svg><svg class="pic"><use href="#music"/></svg>音乐</div>
      <div class="tree"><svg class="chev"><use href="#cr"/></svg><svg class="pic"><use href="#diskc"/></svg>系统 (C:)</div>
      <div class="tree"><svg class="chev"><use href="#cr"/></svg><svg class="pic"><use href="#disk"/></svg>软件 (D:)</div>
      <div class="tree"><svg class="chev"><use href="#cr"/></svg><svg class="pic"><use href="#disk"/></svg>个人 (E:)</div>
      <div class="tree"><svg class="chev"><use href="#cr"/></svg><svg class="pic"><use href="#disk"/></svg>安全 (F:)</div>
      <div class="tree root"><svg class="chev"><use href="#cr"/></svg><svg class="pic"><use href="#net"/></svg>网络</div>
    </div>
    <div class="bar-track flex-shrink-0"><div class="bar-thumb"></div></div>
    <div class="files">
      <div class="tile"><svg><use href="#folder"/></svg>2023版JavaWeb<br>全套资料</div>
      <div class="tile"><svg><use href="#folder"/></svg>adobe_flash_cs<br>6_jjb</div>
      <div class="tile"><svg><use href="#folder"/></svg>ds_store_exp-m<br>aster</div>
      <div class="tile"><svg><use href="#folder"/></svg>GitHack-master</div>
      <div class="tile"><svg><use href="#folder"/></svg>HEU_KMS_Activ<br>ator_v26.0.0_Pa<br>ssword_HEU168</div>
      <div class="tile"><svg><use href="#folder"/></svg>java-pdf</div>
      <div class="tile"><svg><use href="#folder"/></svg>jetbra</div>
      <div></div><div></div>
      <div class="tile"><svg><use href="#folder"/></svg>secguide-main</div>
      <div class="tile"><svg><use href="#folder"/></svg>src</div>
      <div class="tile"><svg><use href="#folder"/></svg>SvnHack-maste<br>r</div>
      <div class="tile"><svg><use href="#folder"/></svg>xcx</div>
      <div class="tile"><svg><use href="#folder"/></svg>Z-BlogPHP_1_7<br>_2_3055_Tenet</div>
      <div class="tile"><svg><use href="#folder"/></svg>小迪</div>
      <div class="tile"><svg><use href="#folder"/></svg>新建文件夹</div>
      <div class="tile"><svg><use href="#folder"/></svg>新建文件夹 (2)</div>
      <div class="tile"><svg><use href="#folder"/></svg>云安全课件</div>
      <div class="tile"><svg><use href="#pdf"/></svg>2021HW _ 溯源<br>反制终极手册(精<br>选版).pdf</div>
      <div class="tile hot"><svg><use href="#pdf"/></svg>Linux 应急响应<br>手册v1.5 发行版<br>(1).pdf</div>
      <div class="tile"><svg><use href="#pdf"/></svg>Linux 应急响应<br>手册v1.5 发行版.<br>pdf</div>
      <div class="tile"><svg><use href="#pdf"/></svg>PHP安全之道—<br>项目安全的架<br>构、技术与实践.<br>pdf</div>
      <div class="tile"><svg><use href="#pdf"/></svg>test.pdf</div>
      <div class="tile"><svg><use href="#pdf"/></svg>细说PHP.pdf</div>
      <div class="tile"><svg viewBox="0 0 94 74"><use href="#folder" width="94" height="74"/><path fill="#f2f4f4" stroke="#a6a7a9" d="M-6.500 73.500h20v20h-20z"/><path fill="none" stroke="#77787a" stroke-width="2.500" d="M-3 90L9 78M1 77h9v9"/></svg>应急响应</div>
    </div>
  </div>
  <div class="d-flex flex-column" style="padding-top:36px">
    <div class="foot-row d-flex align-items-center nw"><span class="flex-shrink-0" style="width:64px">文件名(N):</span>
      <div class="fname d-flex align-items-center justify-content-between flex-shrink-0"><span class="text-caret"></span><svg width="9" height="7"><use href="#cd"/></svg></div>
      <div class="ftype d-flex align-items-center justify-content-between flex-shrink-0">PDF 文档 (*.pdf)<svg width="9" height="7"><use href="#cd"/></svg></div></div>
    <div class="d-flex justify-content-end align-items-center mt-2" style="padding-right:21px"><span class="nw" style="margin-right:49px;color:#77787a;font-size:12px">选项...</span><button class="dbtn main">打开</button><button class="dbtn" style="margin-left:14px">取消</button></div>
  </div>
</section>
<svg class="position-absolute" style="left:1901px;top:1001px" width="9" height="9"><path fill="#a6a7a9" d="M6 0h3v9H0V6h3V4h3z"/></svg>

<aside class="chat">
  <div class="chat-head d-flex align-items-center nw"><svg width="10" height="9" style="margin-right:5px"><path fill="#1e1e1e" d="M0 0h10v7H5L3 9H0z"/><path stroke="#f2f4f4" stroke-dasharray="2 1" d="M2 3.500h6"/></svg>聊天
    <span class="faint d-flex ms-auto"><svg width="8" height="9"><path class="ln" stroke-width="2" d="M0 4.500h8"/></svg><svg width="9" height="9" style="margin:0 15px 0 14px"><path class="ln" d="M1 1h7v7H1zM4 1v3"/></svg><svg width="7" height="9"><path class="ln" d="M0 1l7 7M7 1L0 8"/></svg></span></div>
  <div class="chat-log nw">
    <div class="d-flex pinned"><span>试试别的浏览器</span><span>试试别的浏览器</span><span>试试别的浏览器</span></div>
    <div class="who">鹅码</div><div>下载完也得打开啊</div>
    <div class="who">吃西瓜</div><div>只能是pdf吗，图片行不行</div>
    <div class="who">姚绎染</div><div>简历.pdf</div>
    <div class="who">Master_寒蝉</div><div>能不能pdf让他直上线啊</div>
  </div>
  <div class="chat-send d-flex align-items-center nw">发送至:<span class="faint" style="margin-left:11px">所有人<i class="caret align-middle"></i></span>
    <span class="faint d-flex align-items-center ms-auto"><svg width="13" height="11"><path class="ln" d="M1 1h6l1 2h4v8H1z"/></svg><i class="caret" style="margin-left:2px"></i><svg width="13" height="12" style="margin:0 8px 0 5px"><path class="ln" d="M1 3h11v8H1zM4 3V0h5v3M4 6v2M9 6v2"/></svg><svg width="10" height="12"><circle class="ln" cx="5" cy="3" r="2.500"/><path class="ln" d="M1 11q0-5 4-5t4 5z"/></svg><i class="caret" style="margin-left:2px"></i></span></div>
  <div class="faint text-end" style="padding:43px 21px 0 0;font-size:10px">发送(S)</div>
</aside>

<div class="float-share d-flex align-items-center justify-content-end nw" style="padding-right:5px"><svg width="9" height="9" class="faint me-auto ms-2"><path class="ln" d="M1 2v6M4.500 0v8M8 3v5"/></svg>您正在共享屏幕</div>
<div class="clock-disc text-center">15:30</div>
<div class="speaking d-flex align-items-center nw"><svg width="9" height="13"><path fill="#a6a7a9" d="M3 0h3v7H3z"/><path class="ln" stroke="#a6a7a9" d="M1 5q0 4 3.500 4T8 5M4.500 9v3"/></svg>正在讲话:</div>
<div class="edge d-flex align-items-center ps-2" style="left:0;top:953px;width:26px;height:22px"><svg width="11" height="10"><path stroke="#f2f4f4" d="M0 .500h10M3 4.500h5M0 9.500h10"/></svg></div>
<div class="edge" style="left:0;top:0;width:90px;height:4px"></div><div class="edge" style="left:0;top:0;width:4px;height:90px"></div>
<div class="edge" style="left:1830px;top:0;width:90px;height:4px"></div><div class="edge" style="left:1916px;top:0;width:4px;height:90px"></div>
<div class="edge" style="left:0;top:990px;width:4px;height:90px"></div><div class="edge" style="left:0;top:1076px;width:90px;height:4px"></div>
<div class="edge" style="left:1916px;top:990px;width:4px;height:90px"></div><div class="edge" style="left:1830px;top:1076px;width:90px;height:4px"></div>
<svg class="position-absolute" style="left:911px;top:815px" width="14" height="19"><path fill="#f2f4f4" stroke="#1e1e1e" stroke-width=".7" d="M0 0v17l4-4 3 6 2-1-2-5h5z"/></svg>
</body>
</html>
